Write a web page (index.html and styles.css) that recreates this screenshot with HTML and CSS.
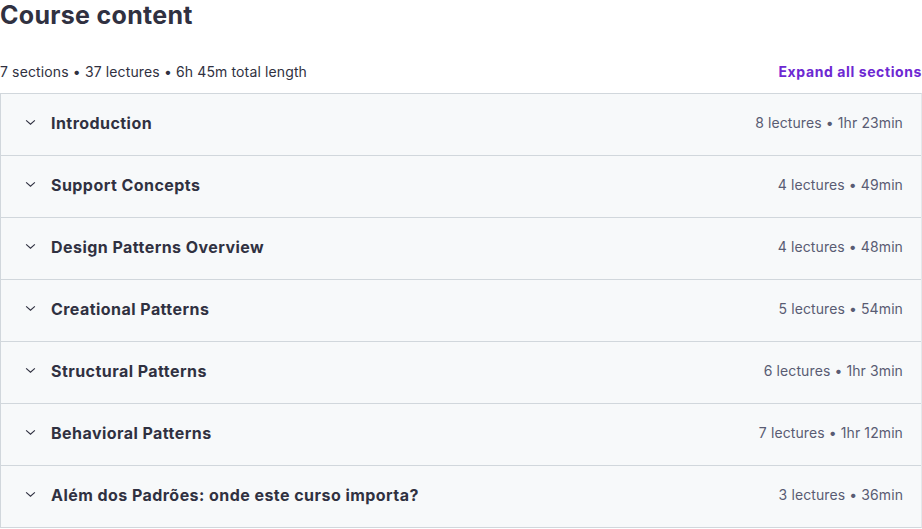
FILE: index.html
```html
<!DOCTYPE html>
<html>
<head>
<meta charset="utf-8">
<link rel="stylesheet" href="styles.css">
</head>
<body>
<div class="course">
  <h2 class="title">Course content</h2>
  <div class="summary">
    <span class="meta">7 sections • 37 lectures • 6h 45m total length</span>
    <span class="expand">Expand all sections</span>
  </div>
  <div class="accordion">
    <div class="row"><span class="left"><svg class="chev" viewBox="0 0 12 8" width="11" height="7"><path d="M1 1.5 L6 6 L11 1.5" fill="none" stroke="#303141" stroke-width="1.3"/></svg><span class="name">Introduction</span></span><span class="info">8 lectures • 1hr 23min</span></div>
    <div class="row"><span class="left"><svg class="chev" viewBox="0 0 12 8" width="11" height="7"><path d="M1 1.5 L6 6 L11 1.5" fill="none" stroke="#303141" stroke-width="1.3"/></svg><span class="name">Support Concepts</span></span><span class="info">4 lectures • 49min</span></div>
    <div class="row"><span class="left"><svg class="chev" viewBox="0 0 12 8" width="11" height="7"><path d="M1 1.5 L6 6 L11 1.5" fill="none" stroke="#303141" stroke-width="1.3"/></svg><span class="name">Design Patterns Overview</span></span><span class="info">4 lectures • 48min</span></div>
    <div class="row"><span class="left"><svg class="chev" viewBox="0 0 12 8" width="11" height="7"><path d="M1 1.5 L6 6 L11 1.5" fill="none" stroke="#303141" stroke-width="1.3"/></svg><span class="name">Creational Patterns</span></span><span class="info">5 lectures • 54min</span></div>
    <div class="row"><span class="left"><svg class="chev" viewBox="0 0 12 8" width="11" height="7"><path d="M1 1.5 L6 6 L11 1.5" fill="none" stroke="#303141" stroke-width="1.3"/></svg><span class="name">Structural Patterns</span></span><span class="info">6 lectures • 1hr 3min</span></div>
    <div class="row"><span class="left"><svg class="chev" viewBox="0 0 12 8" width="11" height="7"><path d="M1 1.5 L6 6 L11 1.5" fill="none" stroke="#303141" stroke-width="1.3"/></svg><span class="name">Behavioral Patterns</span></span><span class="info">7 lectures • 1hr 12min</span></div>
    <div class="row"><span class="left"><svg class="chev" viewBox="0 0 12 8" width="11" height="7"><path d="M1 1.5 L6 6 L11 1.5" fill="none" stroke="#303141" stroke-width="1.3"/></svg><span class="name">Além dos Padrões: onde este curso importa?</span></span><span class="info">3 lectures • 36min</span></div>
  </div>
</div>
</body>
</html>
```

FILE: styles.css
```css
html, body {
  margin: 0;
  padding: 0;
  background: #ffffff;
}
body {
  font-family: "Inter", "Liberation Sans", sans-serif;
  color: #303141;
}
.course {
  width: 922px;
}
.title {
  margin: 0;
  font-size: 25px;
  font-weight: 700;
  line-height: 30px;
  letter-spacing: 0.3px;
  color: #303141;
}
.summary {
  display: flex;
  justify-content: space-between;
  align-items: center;
  margin-top: 31px;
  height: 20px;
  margin-bottom: 12px;
  font-size: 14px;
}
.meta {
  color: #303141;
  letter-spacing: 0.13px;
}
.expand {
  color: #6d28d2;
  font-weight: 700;
  letter-spacing: 0.6px;
}
.accordion {
  border: 1px solid #d1d7dc;
  border-right-color: #e4e8eb;
}
.row {
  display: flex;
  justify-content: space-between;
  align-items: center;
  height: 62px;
  box-sizing: border-box;
  background: #f7f9fa;
  padding: 0 18px 4px 24px;
  border-bottom: 1px solid #d1d7dc;
}
.row:last-child {
  border-bottom: none;
  height: 61px;
}
.left {
  display: flex;
  align-items: center;
}
.chev {
  margin-right: 15px;
}
.name {
  font-size: 16px;
  font-weight: 700;
  letter-spacing: 0.45px;
  color: #303141;
}
.info {
  font-size: 14px;
  color: #595c73;
  letter-spacing: 0.1px;
}
```
